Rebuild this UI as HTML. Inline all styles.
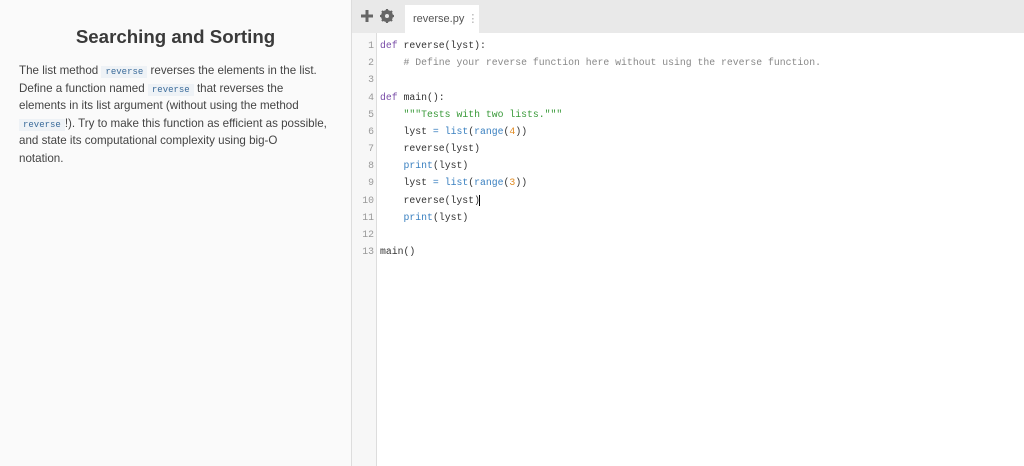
<!DOCTYPE html>
<html><head><style>
body{margin:0;width:1024px;height:466px;overflow:hidden;font-family:"Liberation Sans",sans-serif;background:#fff;position:relative}
#left{position:absolute;left:0;top:0;width:351px;height:466px;background:#fafafa;border-right:1px solid #ddd}
h1{margin:0;position:absolute;top:26px;left:0;width:351px;text-align:center;font-size:18.7px;color:#3a3a3a;font-weight:bold}
#desc{position:absolute;left:19px;top:62px;width:330px;font-size:11.6px;line-height:17.6px;color:#444;white-space:nowrap}
code{font-family:"Liberation Mono",monospace;font-size:9px;line-height:0;color:#3a6b9a;background:#eef2f6;padding:1px 4px}
#bar{position:absolute;left:352px;top:0;right:0;height:33px;background:#e9e9e9}
#tab{position:absolute;left:405px;top:5px;width:74px;height:28px;background:#fff;font-size:11px;color:#555;line-height:28px;padding-left:8px;box-sizing:border-box}
#gut{position:absolute;left:352px;top:33px;width:24px;height:433px;background:#f7f7f7;border-right:1px solid #ddd}
.code{position:absolute;font-family:"Liberation Mono",monospace;font-size:9.8px;line-height:17.17px;white-space:pre;top:37px}
#nums{left:352px;width:22px;text-align:right;color:#999}
#src{left:380px;color:#333}
.k{color:#7a4ea8}.c{color:#888}.s{color:#3a9a3a}.b{color:#3a80c0}.n{color:#e08a20}
</style></head><body>
<div id="left">
<h1>Searching and Sorting</h1>
<div id="desc">The list method <code>reverse</code> reverses the elements in the list.<br>Define a function named <code>reverse</code> that reverses the<br>elements in its list argument (without using the method<br><code>reverse</code>!). Try to make this function as efficient as possible,<br>and state its computational complexity using big-O<br>notation.</div>
</div>
<div id="bar">
<svg style="position:absolute;left:8px;top:9px" width="14" height="14"><path d="M7 1v12M1 7h12" stroke="#666" stroke-width="3"/></svg>
<svg style="position:absolute;left:28px;top:9px" width="14" height="14" viewBox="0 0 14 14"><circle cx="7" cy="7" r="4.5" fill="none" stroke="#666" stroke-width="3"/><path d="M7 0v14M0 7h14M2 2l10 10M12 2L2 12" stroke="#666" stroke-width="2.2"/><circle cx="7" cy="7" r="2" fill="#e9e9e9"/></svg>
</div>
<div id="tab">reverse.py <span style="color:#aaa">⋮</span></div>
<div id="gut"></div>
<div class="code" id="nums">1
2
3
4
5
6
7
8
9
10
11
12
13</div>
<div class="code" id="src"><span class="k">def</span> reverse(lyst):
    <span class="c"># Define your reverse function here without using the reverse function.</span>

<span class="k">def</span> main():
    <span class="s">"""Tests with two lists."""</span>
    lyst <span class="b">=</span> <span class="b">list</span>(<span class="b">range</span>(<span class="n">4</span>))
    reverse(lyst)
    <span class="b">print</span>(lyst)
    lyst <span class="b">=</span> <span class="b">list</span>(<span class="b">range</span>(<span class="n">3</span>))
    reverse(lyst)<span style="border-left:1px solid #000;margin-left:-1px"></span>
    <span class="b">print</span>(lyst)

main()</div>
</body></html>
